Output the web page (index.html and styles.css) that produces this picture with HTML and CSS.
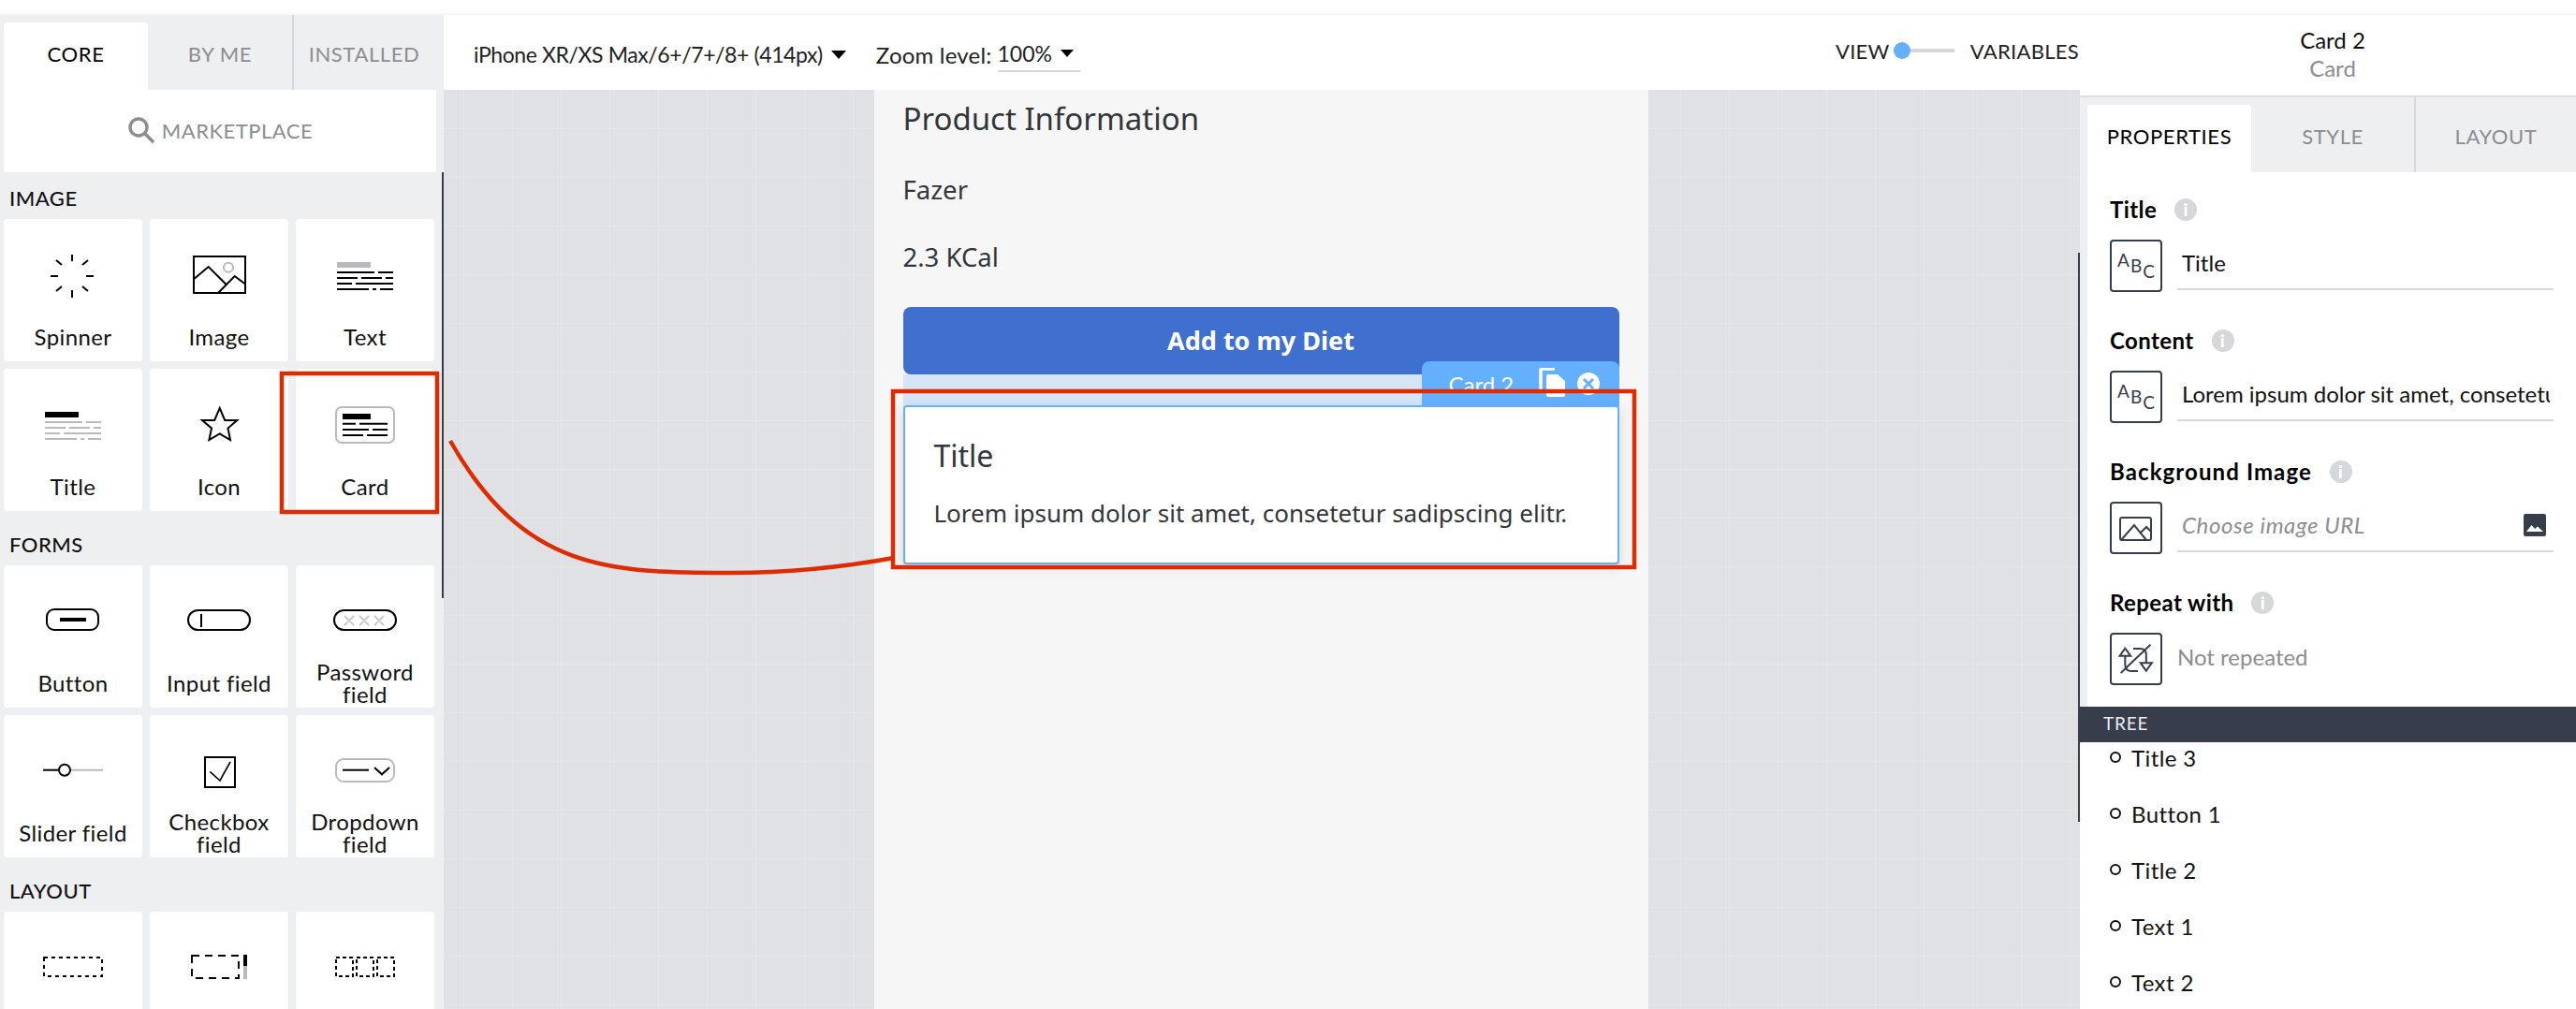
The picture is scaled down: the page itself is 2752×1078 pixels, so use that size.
FILE: index.html
```html
<!DOCTYPE html>
<html lang="en">
<head>
    <meta charset="UTF-8">
    <meta name="viewport" content="width=device-width, initial-scale=1.0">
    <title>Page Builder</title>
    <link rel="stylesheet" href="styles.css">
</head>
<body>
    <div class="top-strip"></div>
    <div class="app">
        <!-- Component library -->
        <aside class="library">
            <div class="tabs">
                <div class="tab active lib-tab-a">CORE</div>
                <div class="tab lib-tab-b">BY ME</div>
                <div class="tab lib-tab-c">INSTALLED</div>
            </div>
            <div class="marketplace">
                <svg class="search-icon" width="30" height="30" viewBox="0 0 30 30"><circle cx="12" cy="12" r="9" fill="none" stroke="#8b8d91" stroke-width="3.4"/><path d="M18.5 18.5 L28 28" stroke="#8b8d91" stroke-width="3.6"/></svg>
                <span>MARKETPLACE</span>
            </div>
            <div class="section-title">IMAGE</div>
            <div class="comp-grid">
                <div class="comp">
                    <svg class="comp-icon" viewBox="0 0 148 102"><path d="M73 38v7M73 76v8M50 61h8M88 61h8M56 44l6 5M84 49l6-5M56 77l6-5M84 72l6 5" stroke="#000" stroke-width="2" fill="none"/></svg>
                    <div class="comp-label">Spinner</div>
                </div>
                <div class="comp">
                    <svg class="comp-icon" viewBox="0 0 148 102"><rect x="47" y="40" width="55" height="39" fill="none" stroke="#000" stroke-width="2"/><path d="M47 64.3L62.7 51 81.7 70M73.3 78.7L90.7 61 101.7 69.3" fill="none" stroke="#000" stroke-width="2"/><circle cx="84" cy="51.7" r="5" fill="none" stroke="#b9bac0" stroke-width="2"/></svg>
                    <div class="comp-label">Image</div>
                </div>
                <div class="comp">
                    <svg class="comp-icon" viewBox="0 0 148 102"><rect x="44" y="46" width="36" height="6" fill="#b9bac0"/><path d="M44 57h40M88 57h16M44 63h22M70 63h22M96 63h8M44 69h16M64 69h40M44 75h34M82 75h4M90 75h14" stroke="#000" stroke-width="2"/></svg>
                    <div class="comp-label">Text</div>
                </div>
                <div class="comp">
                    <svg class="comp-icon" viewBox="0 0 148 102"><rect x="44" y="46" width="36" height="6" fill="#000"/><path d="M44 57h40M88 57h16M44 63h22M70 63h22M96 63h8M44 69h16M64 69h40M44 75h34M82 75h4M90 75h14" stroke="#b9bac0" stroke-width="2"/></svg>
                    <div class="comp-label">Title</div>
                </div>
                <div class="comp">
                    <svg class="comp-icon" viewBox="0 0 148 102"><polygon points="74.7,42 80.2,55 93.3,55 83.5,63.5 86,76 74.7,69.5 63.4,76 66,63.5 56,55 69.2,55" fill="none" stroke="#000" stroke-width="2"/></svg>
                    <div class="comp-label">Icon</div>
                </div>
                <div class="comp">
                    <svg class="comp-icon" viewBox="0 0 148 102"><rect x="43" y="41" width="62" height="38" rx="6" fill="none" stroke="#b9bac0" stroke-width="2"/><rect x="50" y="48" width="30" height="6" fill="#000"/><path d="M50 58.7h14M68 58.7h30M50 65h28M82 65h16M50 71h22M76 71h22" stroke="#000" stroke-width="2"/></svg>
                    <div class="comp-label">Card</div>
                </div>
            </div>
            <div class="section-title">FORMS</div>
            <div class="comp-grid">
                <div class="comp">
                    <svg class="comp-icon" viewBox="0 0 148 102"><rect x="46" y="47" width="55" height="22" rx="8" fill="none" stroke="#000" stroke-width="2"/><rect x="60" y="56" width="28" height="4" fill="#000"/></svg>
                    <div class="comp-label">Button</div>
                </div>
                <div class="comp">
                    <svg class="comp-icon" viewBox="0 0 148 102"><rect x="41" y="48" width="66" height="21" rx="10.5" fill="none" stroke="#000" stroke-width="2"/><path d="M55 52v14" stroke="#000" stroke-width="2"/></svg>
                    <div class="comp-label">Input field</div>
                </div>
                <div class="comp">
                    <svg class="comp-icon" viewBox="0 0 148 102"><rect x="41" y="48" width="66" height="21" rx="10.5" fill="none" stroke="#000" stroke-width="2"/><path d="M52 54l10 10M62 54l-10 10M68 54l10 10M78 54l-10 10M84 54l10 10M94 54l-10 10" stroke="#c9cace" stroke-width="2"/></svg>
                    <div class="comp-label">Password field</div>
                </div>
                <div class="comp">
                    <svg class="comp-icon" viewBox="0 0 148 102"><path d="M72 58.7h34" stroke="#b9bac0" stroke-width="2"/><path d="M42 58.7h16" stroke="#000" stroke-width="2"/><circle cx="65" cy="58.7" r="6" fill="none" stroke="#000" stroke-width="2"/></svg>
                    <div class="comp-label">Slider field</div>
                </div>
                <div class="comp">
                    <svg class="comp-icon" viewBox="0 0 148 102"><rect x="59" y="45" width="32" height="32" fill="none" stroke="#000" stroke-width="2"/><path d="M64.3 60.3L75 70 86 50" fill="none" stroke="#000" stroke-width="1.6"/></svg>
                    <div class="comp-label">Checkbox field</div>
                </div>
                <div class="comp">
                    <svg class="comp-icon" viewBox="0 0 148 102"><rect x="43" y="47" width="62" height="24" rx="8" fill="none" stroke="#b9bac0" stroke-width="2"/><path d="M50 58.7h28" stroke="#000" stroke-width="2"/><path d="M84 56l8 7.3 8-7.3" fill="none" stroke="#000" stroke-width="2"/></svg>
                    <div class="comp-label">Dropdown field</div>
                </div>
            </div>
            <div class="section-title">LAYOUT</div>
            <div class="comp-grid">
                <div class="comp">
                    <svg class="comp-icon" viewBox="0 0 148 102"><rect x="43" y="49" width="62" height="20" fill="none" stroke="#000" stroke-width="2" stroke-dasharray="4 4"/></svg>
                </div>
                <div class="comp">
                    <svg class="comp-icon" viewBox="0 0 148 102"><rect x="45" y="47" width="50" height="24" fill="none" stroke="#000" stroke-width="2" stroke-dasharray="8 6"/><rect x="100" y="46" width="4" height="26" fill="#b9bac0"/><rect x="100" y="46" width="4" height="12" fill="#000"/></svg>
                </div>
                <div class="comp">
                    <svg class="comp-icon" viewBox="0 0 148 102"><g fill="none" stroke="#000" stroke-width="2" stroke-dasharray="4 3"><rect x="43" y="49" width="18" height="20"/><rect x="65" y="49" width="18" height="20"/><rect x="87" y="49" width="18" height="20"/></g></svg>
                </div>
            </div>
            <div class="scroll-thumb lib-thumb"></div>
        </aside>

        <!-- Canvas -->
        <main class="center">
            <div class="toolbar">
                <div class="device">iPhone XR/XS Max/6+/7+/8+ (414px)</div>
                <div class="caret"></div>
                <div class="zoom-label">Zoom level:</div>
                <div class="zoom-select"><span>100%</span><div class="caret"></div></div>
                <div class="view-toggle">
                    <span>VIEW</span>
                    <div class="switch"><div class="switch-knob"></div></div>
                    <span>VARIABLES</span>
                </div>
            </div>
            <div class="canvas">
                <div class="phone">
                    <h2 class="product-title">Product Information</h2>
                    <p class="product-text">Fazer</p>
                    <p class="product-text">2.3 KCal</p>
                    <button class="diet-btn">Add to my Diet</button>
                    <div class="drop-zone">
                        <div class="card-tag">
                            <span>Card 2</span>
                            <svg width="30" height="32" viewBox="0 0 30 32"><path d="M2 26V3a2 2 0 0 1 2-2H17" fill="none" stroke="#fff" stroke-width="3.5"/><path d="M8 9a2 2 0 0 1 2-2h10l8 7v15a2 2 0 0 1-2 2H10a2 2 0 0 1-2-2z" fill="#fff"/></svg>
                            <svg width="24" height="24" viewBox="0 0 24 24"><circle cx="12" cy="12" r="12" fill="#fff"/><path d="M7 7l10 10M17 7L7 17" stroke="#64b0ff" stroke-width="3"/></svg>
                        </div>
                        <div class="selected-card">
                            <div class="card-title">Title</div>
                            <div class="card-text">Lorem ipsum dolor sit amet, consetetur sadipscing elitr.</div>
                        </div>
                    </div>
                </div>
            </div>
        </main>

        <!-- Properties -->
        <aside class="inspector">
            <div class="inspector-head">
                <div class="head-name">Card 2</div>
                <div class="head-type">Card</div>
            </div>
            <div class="tabs inspector-tabs">
                <div class="tab active insp-tab-a">PROPERTIES</div>
                <div class="tab insp-tab-b">STYLE</div>
                <div class="tab insp-tab-c">LAYOUT</div>
            </div>
            <div class="props">
                <div class="field">
                    <div class="field-label">Title <span class="info">i</span></div>
                    <div class="field-row">
                        <div class="type-box"><span class="abc-a">A</span><span class="abc-b">B</span><span class="abc-c">C</span></div>
                        <div class="field-value"><span>Title</span></div>
                    </div>
                </div>
                <div class="field">
                    <div class="field-label">Content <span class="info">i</span></div>
                    <div class="field-row">
                        <div class="type-box"><span class="abc-a">A</span><span class="abc-b">B</span><span class="abc-c">C</span></div>
                        <div class="field-value"><span>Lorem ipsum dolor sit amet, consetetur sadipscing elitr.</span></div>
                    </div>
                </div>
                <div class="field">
                    <div class="field-label label-wide">Background Image <span class="info">i</span></div>
                    <div class="field-row">
                        <div class="type-box">
                            <svg width="56" height="56" viewBox="0 0 56 56"><rect x="11" y="17" width="33" height="24" rx="2" fill="none" stroke="#383d4b" stroke-width="2"/><path d="M12 41l14-16 13 16M33 33l6-6 5 5" fill="none" stroke="#383d4b" stroke-width="2"/></svg>
                        </div>
                        <div class="field-value placeholder">
                            <span>Choose image URL</span>
                            <svg class="pick-icon" width="24" height="24" viewBox="0 0 24 24"><rect width="24" height="24" rx="2" fill="#383d4b"/><path d="M3 19l5.5-7 3.5 4 3-2.5 6 5.5z" fill="#fff"/></svg>
                        </div>
                    </div>
                </div>
                <div class="field">
                    <div class="field-label">Repeat with <span class="info">i</span></div>
                    <div class="field-row">
                        <div class="type-box">
                            <svg width="56" height="56" viewBox="0 0 56 56"><g fill="none" stroke="#383d4b" stroke-width="2"><path d="M10.6 24.7h11.6L16.3 16.7zM32.8 32.3h12l-6 8.4z"/><path d="M16.3 24.7V34q0 7 7 7H30M38.8 32.3V23q0-6-7-6H25M11.7 43L43.4 12.7"/></g></svg>
                        </div>
                        <div class="not-repeated">Not repeated</div>
                    </div>
                </div>
            </div>
            <div class="tree-head">TREE</div>
            <div class="tree">
                <ul class="tree-list">
                    <li><i></i>Title 3</li>
                    <li><i></i>Button 1</li>
                    <li><i></i>Title 2</li>
                    <li><i></i>Text 1</li>
                    <li><i></i>Text 2</li>
                </ul>
            </div>
            <div class="scroll-thumb insp-thumb"></div>
        </aside>
    </div>

    <!-- Red callout drawn over the page -->
    <svg class="callout" width="2752" height="1078" viewBox="0 0 2752 1078">
        <g fill="none" stroke="#de2c00" stroke-width="4.5">
            <rect x="301" y="399" width="166" height="148"/>
            <rect x="954" y="418" width="792" height="188"/>
            <path d="M481 471C560 610 650 612 781 612C840 612 900 606 955 596"/>
        </g>
    </svg>
</body>
</html>
```

FILE: styles.css
```css
* {
    box-sizing: border-box;
}

html, body {
    margin: 0;
    padding: 0;
    height: 100%;
    overflow: hidden;
}

body {
    position: relative;
    font-family: Lato, "Open Sans", sans-serif;
    color: #111;
    background-color: #fff;
}

.top-strip {
    height: 16px;
    border-bottom: 2px solid #f5f6f7;
}

.app {
    display: flex;
    height: 1062px;
}

/* library */

.library {
    position: relative;
    flex: 0 0 474px;
    background-color: #eeeff1;
    overflow: hidden;
}

.tabs {
    display: flex;
    height: 80px;
    padding: 8px 0 0 4px;
    background-color: #eeeff1;
}

.tab {
    display: flex;
    align-items: center;
    justify-content: center;
    padding-bottom: 6px;
    font-size: 22px;
    letter-spacing: 0.6px;
    color: #8b8d91;
}

.tab.active {
    background-color: #fff;
    color: #000;
    border-radius: 4px 4px 0 0;
}

.lib-tab-a { width: 154px; }
.lib-tab-b { width: 156px; border-right: 2px solid #d5d7db; margin-top: -8px; padding-top: 8px; }
.lib-tab-c { flex: 1; padding-right: 10px; }

.marketplace {
    display: flex;
    align-items: center;
    justify-content: center;
    gap: 7px;
    width: 462px;
    height: 88px;
    margin-left: 4px;
    padding-bottom: 2px;
    background-color: #fff;
    font-size: 22px;
    letter-spacing: 0.5px;
    color: #8b8d91;
}

.section-title {
    height: 50px;
    margin-top: 8px;
    padding: 6px 0 0 10px;
    line-height: 44px;
    font-size: 22px;
    font-weight: 500;
    letter-spacing: 0.5px;
}

.marketplace + .section-title {
    margin-top: 0;
}

.comp-grid {
    display: grid;
    grid-template-columns: repeat(3, 148px);
    gap: 8px;
    padding-left: 4px;
}

.comp {
    height: 152px;
    background-color: #fff;
    border-radius: 4px;
}

.comp-icon {
    display: block;
    width: 148px;
    height: 102px;
}

.comp-label {
    display: flex;
    align-items: center;
    justify-content: center;
    height: 48px;
    padding: 0 10px;
    text-align: center;
    font-size: 24px;
    line-height: 24px;
    letter-spacing: 0.4px;
}

.scroll-thumb {
    position: absolute;
    width: 2px;
    background-color: #383d4b;
}

.lib-thumb {
    right: 0;
    top: 168px;
    height: 455px;
}

/* center */

.center {
    flex: 1;
    display: flex;
    flex-direction: column;
    min-width: 0;
}

.toolbar {
    display: flex;
    align-items: center;
    height: 80px;
    padding: 4px 0 0 32px;
    font-size: 24px;
    color: #222;
}

.device {
    font-size: 23px;
    letter-spacing: -0.4px;
}

.caret {
    width: 0;
    height: 0;
    margin-left: 9px;
    border-left: 8px solid transparent;
    border-right: 8px solid transparent;
    border-top: 9px solid #000;
}

.zoom-label {
    margin-left: 32px;
    letter-spacing: 0.2px;
}

.zoom-select {
    display: flex;
    align-items: center;
    width: 88px;
    height: 38px;
    margin: 0 0 0 6px;
    border-bottom: 2px solid #d5d7db;
    font-size: 23px;
}

.zoom-select .caret {
    border-left-width: 7px;
    border-right-width: 7px;
    border-top-width: 8px;
}

.view-toggle {
    display: flex;
    align-items: center;
    margin: -8px 1px 0 auto;
    font-size: 22px;
    letter-spacing: 0.3px;
}

.switch {
    position: relative;
    width: 65px;
    height: 4px;
    margin: 0 17px 0 4px;
    background-color: #d5d7db;
}

.switch-knob {
    position: absolute;
    left: 0;
    top: -7px;
    width: 18px;
    height: 18px;
    border-radius: 50%;
    background-color: #64b0ff;
}

.canvas {
    flex: 1;
    display: flex;
    justify-content: center;
    padding-right: 2px;
    background-color: #e0e1e5;
    background-image:
        linear-gradient(rgba(255, 255, 255, 0.18) 1px, transparent 1px),
        linear-gradient(90deg, rgba(255, 255, 255, 0.18) 1px, transparent 1px);
    background-size: 52px 52px;
    background-position: 21px 41px;
}

.phone {
    width: 827px;
    padding: 0 31px;
    background-color: #f6f6f6;
    font-family: "Noto Sans", "Open Sans", sans-serif;
    color: #32363a;
}

.product-title {
    margin: 0;
    padding-top: 11px;
    height: 72px;
    line-height: 40px;
    font-size: 33px;
    font-weight: 400;
}

.product-text {
    margin: 0;
    height: 72px;
    padding-top: 16px;
    line-height: 38px;
    font-size: 27.5px;
}

.diet-btn {
    display: block;
    width: 100%;
    height: 72px;
    margin-top: 16px;
    border: 0;
    border-radius: 8px;
    padding-bottom: 2px;
    background-color: #4070cf;
    color: #fff;
    font-family: "Noto Sans", "Open Sans", sans-serif;
    font-size: 27px;
    font-weight: 700;
}

.drop-zone {
    position: relative;
    padding-top: 33px;
    background-color: #d4e6f6;
}

.card-tag {
    position: absolute;
    right: 0;
    top: -14px;
    display: flex;
    align-items: flex-start;
    width: 211px;
    height: 48px;
    padding: 10px 0 0 29px;
    border-radius: 8px 8px 0 0;
    background-color: #64b0ff;
    color: #fff;
    font-family: Lato, sans-serif;
    font-size: 24px;
    line-height: 30px;
}

.card-tag svg:first-of-type {
    margin: -3px 0 0 27px;
}

.card-tag svg:last-of-type {
    margin: 2px 0 0 11px;
}

.selected-card {
    position: relative;
    height: 170px;
    padding: 32px 31px 0;
    border: 2px solid #64b0ff;
    border-radius: 4px;
    background-color: #fff;
    box-shadow: 0 3px 14px rgba(0, 0, 0, 0.12);
}

.card-title {
    height: 63px;
    line-height: 40px;
    font-size: 32px;
}

.card-text {
    line-height: 36px;
    font-size: 26px;
}

/* inspector */

.inspector {
    position: relative;
    flex: 0 0 530px;
    min-width: 0;
    display: flex;
    flex-direction: column;
}

.inspector-head {
    height: 88px;
    padding: 12px 0 0 10px;
    border-bottom: 2px solid #dcdde0;
    text-align: center;
    font-size: 24px;
    line-height: 30px;
}

.head-type {
    color: #8b8d91;
}

.inspector-tabs {
    flex: none;
    padding-left: 8px;
}

.insp-tab-a { width: 175px; }
.insp-tab-b { width: 176px; border-right: 2px solid #d5d7db; margin-top: -8px; padding-top: 8px; }
.insp-tab-c { flex: 1; }

.props {
    flex: none;
    height: 571px;
    padding: 20px 24px 0 24px;
    border-left: 8px solid #eeeff1;
}

.field {
    margin-bottom: 32px;
}

.field-label {
    display: flex;
    align-items: center;
    gap: 19px;
    height: 40px;
    margin-bottom: 12px;
    padding-bottom: 1px;
    font-size: 24px;
    font-weight: 700;
    letter-spacing: 0.4px;
    color: #000;
}

.label-wide {
    letter-spacing: 1.1px;
}

.info {
    width: 24px;
    height: 24px;
    border-radius: 50%;
    background-color: #d5d7db;
    color: #fff;
    text-align: center;
    font-size: 19px;
    line-height: 24px;
    font-weight: 900;
}

.field-row {
    display: flex;
    align-items: flex-start;
}

.type-box {
    display: flex;
    justify-content: center;
    flex: 0 0 56px;
    height: 56px;
    border: 2px solid #383d4b;
    border-radius: 4px;
    color: #383d4b;
    font-size: 19px;
    line-height: 22px;
}

.type-box svg {
    margin: -2px;
    flex: none;
}

.abc-a { margin-top: 9px; }
.abc-b { margin: 15px 1px 0; }
.abc-c { margin-top: 21px; }

.field-value {
    display: flex;
    align-items: center;
    flex: 1;
    min-width: 0;
    height: 54px;
    margin-left: 16px;
    padding: 0 4px 4px 5px;
    border-bottom: 2px solid #d5d7db;
    font-size: 24px;
    white-space: nowrap;
    overflow: hidden;
}

.field-value span {
    overflow: hidden;
}

.placeholder {
    justify-content: space-between;
    font-style: italic;
    letter-spacing: 0.6px;
    color: #8b8d91;
}

.pick-icon {
    flex: none;
    margin: 2px 4px 0 0;
}

.not-repeated {
    height: 54px;
    margin-left: 16px;
    line-height: 52px;
    font-size: 24px;
    color: #8b8d91;
}

.tree-head {
    flex: none;
    height: 38px;
    padding-left: 25px;
    background-color: #383d4b;
    color: #eee;
    font-size: 19px;
    line-height: 36px;
    letter-spacing: 0.8px;
}

.tree {
    flex: 1;
    min-height: 0;
    overflow: hidden;
}

.tree-list {
    margin: -14px 0 0;
    padding: 0;
    list-style: none;
}

.tree-list li {
    display: flex;
    align-items: center;
    height: 60px;
    padding-left: 32px;
    font-size: 24px;
    letter-spacing: 0.4px;
}

.tree-list i {
    width: 12px;
    height: 12px;
    margin-right: 11px;
    border: 2px solid #111;
    border-radius: 50%;
}

.insp-thumb {
    left: -2px;
    top: 254px;
    height: 608px;
}

/* red callout */

.callout {
    position: absolute;
    left: 0;
    top: 0;
    pointer-events: none;
}
```
